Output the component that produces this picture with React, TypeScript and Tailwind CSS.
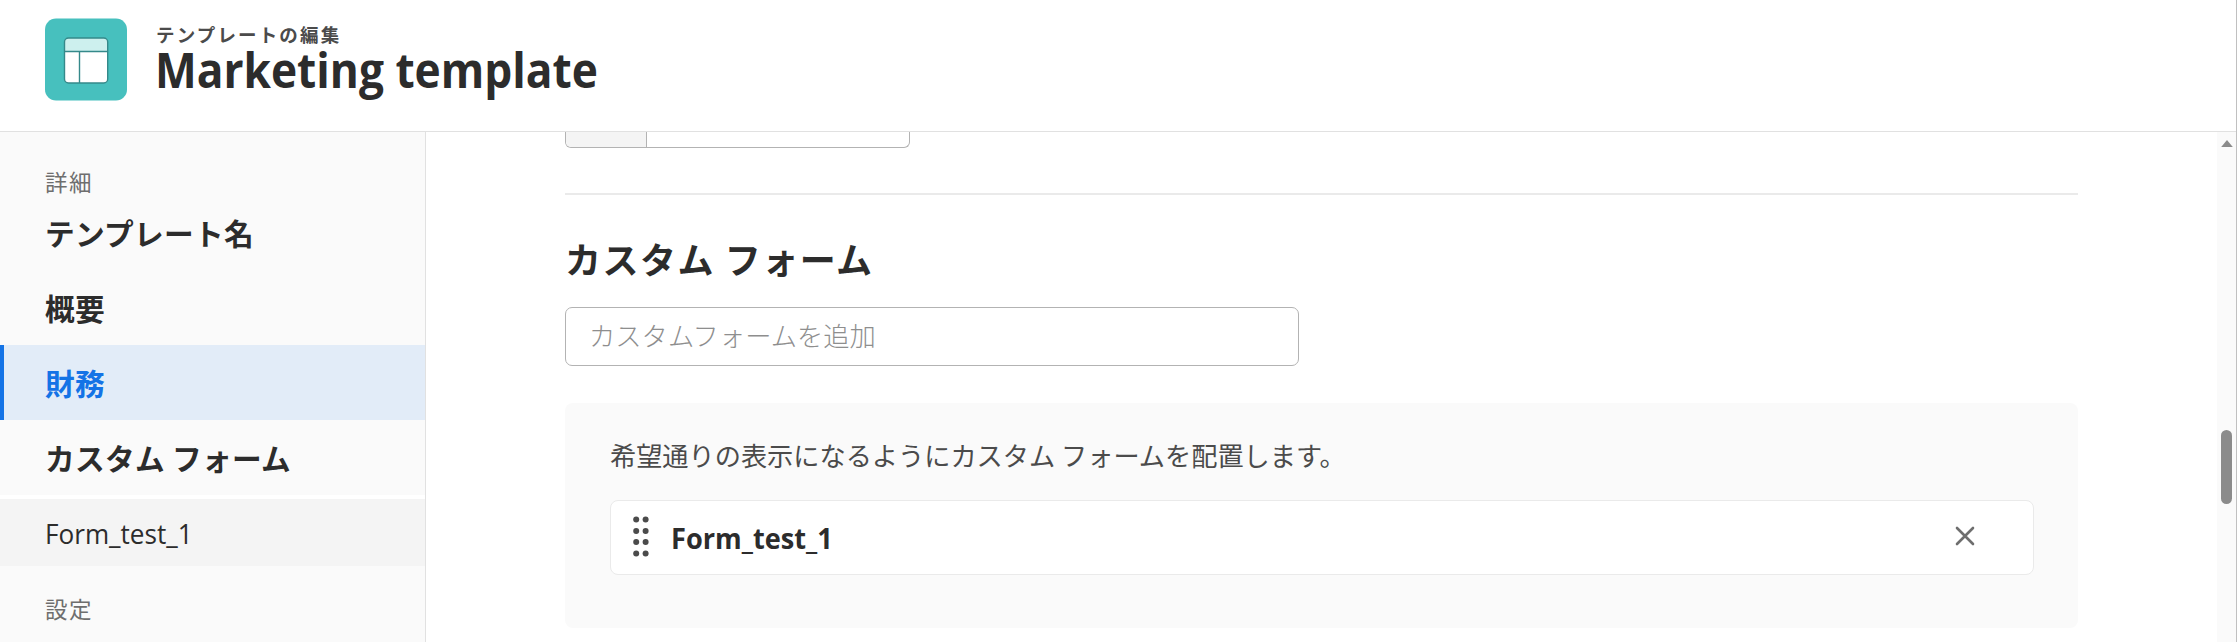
const dots = [519.5, 531, 542, 553.5];

function NavItem({ label, active = false }: { label: string; active?: boolean }) {
  return (
    <div
      className={
        active
          ? "flex h-[75px] shrink-0 items-center border-l-4 border-[#1473e6] bg-[#e2ecf8] pl-[41px] text-[29.7px] leading-none font-bold tracking-[0.3px] text-[#1473e6]"
          : "flex h-[75px] shrink-0 items-center pl-[45px] text-[29.7px] leading-none font-bold tracking-[0.3px] text-[#2c2c2c]"
      }
    >
      {label}
    </div>
  );
}

export default function App() {
  return (
    <div
      lang="ja"
      className="flex h-[642px] w-[2238px] overflow-hidden bg-white font-['Noto_Sans_CJK_JP',sans-serif] whitespace-nowrap"
    >
      <div className="flex w-[2236px] shrink-0 flex-col">
        <header className="flex h-[132px] shrink-0 border-b border-[#e1e1e1] pt-[18px] pl-[45px]">
          <svg width="82" height="83" viewBox="0 0 82 83" className="shrink-0">
            <rect x="0" y="0.5" width="82" height="82" rx="11" fill="#47c0be" />
            <path d="M19.5 33.500V24a4 4 0 0 1 4-4h35.200a4 4 0 0 1 4 4v9.500z" fill="#cdf0ee" />
            <path d="M19.500 33.500h43.200V61a4 4 0 0 1-4 4H23.500a4 4 0 0 1-4-4z" fill="#fff" />
            <g fill="none" stroke="#35898a" strokeWidth="1.400">
              <rect x="19.500" y="20" width="43.200" height="45" rx="4" />
              <path d="M19.500 33.500h43.200M34.500 33.500V65" />
            </g>
          </svg>
          <div className="flex flex-col pl-[29px]">
            <div className="mt-[5px] h-[22px] text-[18.5px] leading-[22px] font-bold tracking-[2.15px] text-[#4b4b4b]">
              テンプレートの編集
            </div>
            <h1 className="-mt-px -ml-px h-[50px] origin-left scale-x-[0.903] font-['Open_Sans',sans-serif] text-[49px] leading-[50px] font-bold text-[#2c2c2c]">
              Marketing template
            </h1>
          </div>
        </header>

        <div className="flex min-h-0 flex-1">
          <nav className="flex w-[426px] shrink-0 flex-col overflow-hidden border-r border-[#e1e1e1] bg-[#fafafa]">
            <div className="h-[63px] shrink-0 pt-[37px] pl-[45px] text-[22.5px] leading-[24px] tracking-[1.5px] text-[#6e6e6e]">
              詳細
            </div>
            <NavItem label="テンプレート名" />
            <NavItem label="概要" />
            <NavItem label="財務" active />
            <NavItem label="カスタム フォーム" />
            <div className="flex h-[71px] shrink-0 items-center border-t-4 border-white bg-[#f4f4f4] pt-[2px] pl-[45px] text-[#2c2c2c]">
              <span className="origin-left scale-x-[0.95] font-['Open_Sans',sans-serif] text-[27.5px] leading-none">
                Form_test_1
              </span>
            </div>
            <div className="pt-[30px] pl-[45px] text-[22.5px] leading-[24px] tracking-[1.5px] text-[#6e6e6e]">設定</div>
          </nav>

          <main className="flex min-w-0 flex-1 flex-col overflow-hidden pl-[139px]">
            <div className="flex h-[16px] w-[345px] shrink-0 overflow-hidden rounded-b-[6px] border border-t-0 border-[#b3b3b3]">
              <div className="w-[81px] border-r border-[#b3b3b3] bg-[#f4f4f4]" />
            </div>
            <div className="mt-[45px] h-[2px] w-[1513px] shrink-0 bg-[#eaeaea]" />
            <h2 className="mt-[39px] h-[48px] shrink-0 text-[36px] leading-[48px] font-bold tracking-[1.5px] text-[#2c2c2c]">
              カスタム フォーム
            </h2>
            <div className="mt-[25px] flex h-[59px] w-[734px] shrink-0 items-center rounded-[7px] border border-[#b3b3b3] pb-[2px] pl-[23px] text-[26.3px] leading-none font-light text-[#8e8e8e]">
              カスタムフォームを追加
            </div>
            <section className="mt-[37px] h-[225px] w-[1513px] shrink-0 rounded-[8px] bg-[#fafafa] px-[45px] pt-[37px]">
              <p className="h-[30px] text-[26.2px] leading-[30px] text-[#4b4b4b]">
                希望通りの表示になるようにカスタム フォームを配置します。
              </p>
              <div className="mt-[30px] flex h-[75px] w-[1424px] items-center rounded-[8px] border border-[#eaeaea] bg-white pl-[21px]">
                <svg width="18" height="42" viewBox="632 516 18 42" fill="#4b4b4b" className="mb-[2px]">
                  {dots.map((y) => (
                    <g key={y}>
                      <circle cx="636.2" cy={y} r="3" />
                      <circle cx="645.6" cy={y} r="3" />
                    </g>
                  ))}
                </svg>
                <div className="flex flex-1 pl-[21px] text-[#2c2c2c]">
                  <span className="origin-left scale-x-[0.97] font-['Open_Sans',sans-serif] text-[28px] leading-none font-bold">
                    Form_test_1
                  </span>
                </div>
                <svg width="20" height="20" viewBox="0 0 20 20" className="mr-[58px] mb-[3px]">
                  <path d="M2 2l16 16M18 2L2 18" stroke="#6e6e6e" strokeWidth="2.600" strokeLinecap="round" />
                </svg>
              </div>
            </section>
          </main>

          <div className="flex w-[19px] shrink-0 flex-col items-center bg-[#fafafa] pt-[8px]">
            <svg width="12" height="7" viewBox="0 0 12 7">
              <path d="M6 0L11.800 7H.2z" fill="#8b8b8b" />
            </svg>
            <div className="mt-[283px] h-[74px] w-[11px] rounded-full bg-[#8b8b8b]" />
          </div>
        </div>
      </div>
      <div className="w-px bg-[#c0c0c0]" />
    </div>
  );
}
